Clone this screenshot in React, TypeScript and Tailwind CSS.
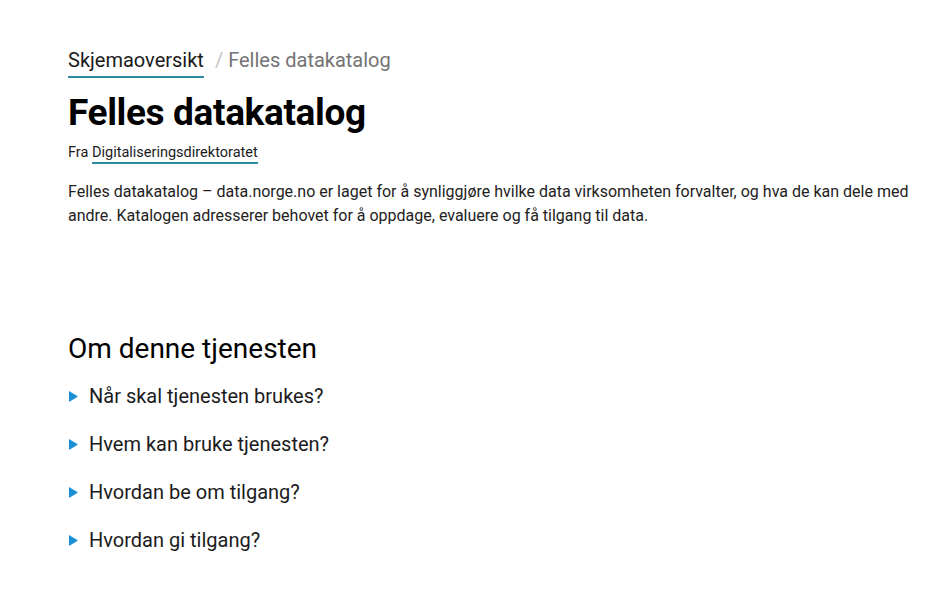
const questions = [
  "Når skal tjenesten brukes?",
  "Hvem kan bruke tjenesten?",
  "Hvordan be om tilgang?",
  "Hvordan gi tilgang?",
];

export default function App() {
  return (
    <div className="min-h-[594px] bg-white font-['Roboto',sans-serif] text-[#1b1b1b]">
      <div className="w-[925px] pl-[68px] pt-[46px]">
        {/* Breadcrumb */}
        <nav className="flex items-baseline text-[20px] leading-[28px]">
          <a className="border-b-2 border-[#2a8ca2] pb-[2px] text-[#1b1b1b]">
            Skjemaoversikt
          </a>
          <span className="ml-[11px] text-[#c4c4c4]">/</span>
          <span className="ml-[5px] text-[#737373]">Felles datakatalog</span>
        </nav>

        <h1 className="mt-[12px] text-[37px] font-bold leading-[46px] tracking-[-0.01em] text-black">
          Felles datakatalog
        </h1>

        <p className="mt-[8px] text-[14.5px] leading-[18px]">
          Fra{" "}
          <span className="border-b-2 border-[#2a8ca2] pb-[1px]">
            Digitaliseringsdirektoratet
          </span>
        </p>

        <p className="mt-[18px] text-[16px] leading-[24px] text-[#222]">
          Felles datakatalog – data.norge.no er laget for å synliggjøre hvilke data virksomheten forvalter, og hva de kan dele med andre. Katalogen adresserer behovet for å oppdage, evaluere og få tilgang til data.
        </p>

        {/* Om denne tjenesten */}
        <h2 className="mt-[103px] text-[28px] font-normal leading-[36px] text-black">
          Om denne tjenesten
        </h2>

        <ul className="mt-[15px] flex flex-col gap-[20px]">
          {questions.map((q) => (
            <li key={q} className="flex h-[28px] items-center gap-[11px] text-[20px] text-[#1b1b1b]">
              <svg width="9" height="11" viewBox="0 0 9 11" className="ml-[1px] shrink-0">
                <path d="M0 0L9 5.5L0 11Z" fill="#1a8fd6" />
              </svg>
              <span>{q}</span>
            </li>
          ))}
        </ul>
      </div>
    </div>
  );
}
